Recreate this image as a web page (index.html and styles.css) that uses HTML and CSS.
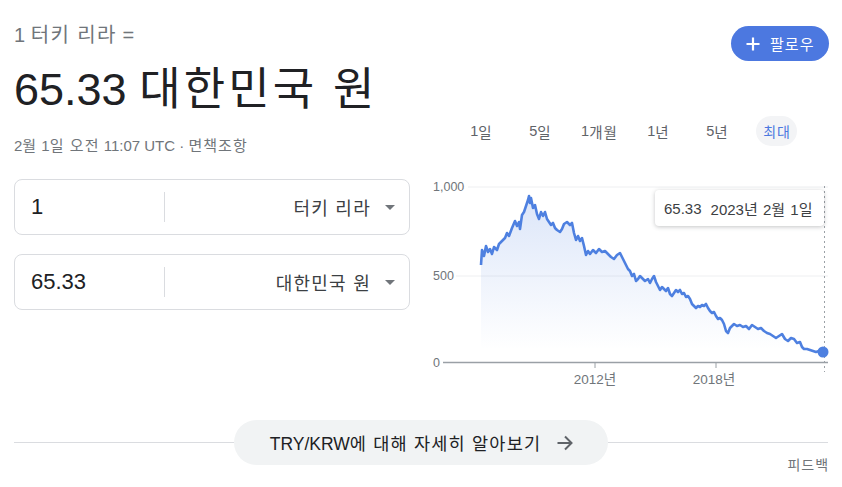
FILE: index.html
```html
<!DOCTYPE html>
<html lang="ko">
<head>
<meta charset="utf-8">
<title>TRY to KRW</title>
<link rel="stylesheet" href="styles.css">
</head>
<body>
<div class="page">
  <div class="main">
    <div class="left">
      <div class="label">1 <span class="ko">터키 리라</span> =</div>
      <div class="value">65.33 <span class="ko">대한민국 원</span></div>
      <div class="date">2<span class="ko">월</span> 1<span class="ko">일 오전</span> 11:07 UTC · <span class="ko">면책조항</span></div>
      <div class="field">
        <div class="amount">1</div>
        <div class="divider"></div>
        <div class="currency"><span class="ko">터키 리라</span><span class="caret"></span></div>
      </div>
      <div class="field">
        <div class="amount">65.33</div>
        <div class="divider"></div>
        <div class="currency"><span class="ko">대한민국 원</span><span class="caret"></span></div>
      </div>
    </div>
    <div class="right">
      <div class="follow-row">
        <button class="follow">
          <svg class="plus" width="14" height="14" viewBox="0 0 14 14"><path d="M7 0.5v13M0.5 7h13" stroke="#fff" stroke-width="2.2" fill="none"/></svg>
          <span class="ko">팔로우</span>
        </button>
      </div>
      <div class="tabs">
        <div class="tab">1<span class="ko">일</span></div>
        <div class="tab">5<span class="ko">일</span></div>
        <div class="tab">1<span class="ko">개월</span></div>
        <div class="tab">1<span class="ko">년</span></div>
        <div class="tab">5<span class="ko">년</span></div>
        <div class="tab"><span class="active ko">최대</span></div>
      </div>
      <div class="chart">
        <svg width="422" height="215" viewBox="420 175 422 215">
          <defs>
            <linearGradient id="fade" x1="0" y1="195" x2="0" y2="350" gradientUnits="userSpaceOnUse">
              <stop offset="0" stop-color="#4e80e0" stop-opacity="0.2"/>
              <stop offset="1" stop-color="#4e80e0" stop-opacity="0"/>
            </linearGradient>
          </defs>
          <line x1="468" y1="187" x2="828" y2="187" stroke="#eeeff1" stroke-width="1"/>
          <line x1="456" y1="276" x2="828" y2="276" stroke="#eeeff1" stroke-width="1"/>
          <text class="ylab" x="433" y="191">1,000</text>
          <text class="ylab" x="433" y="280">500</text>
          <text class="ylab" x="433" y="367">0</text>
          <path fill="url(#fade)" d="M481,265 L482,250 L484,256 L486,246 L488,252 L490,249 L492,254 L494,247 L497,250 L499,244 L502,241 L505,238 L507,233 L509,236 L512,228 L515,221 L517,226 L519,222 L520,229 L522,215 L524,212 L526,206 L528,200 L529,196 L530,203 L531,198 L533,208 L535,205 L537,214 L539,219 L541,212 L543,216 L545,212 L547,219 L549,222 L551,225 L553,223 L555,228 L557,230 L560,232 L562,229 L564,224 L567,222 L570,225 L572,223 L574,233 L576,240 L578,236 L580,241 L582,238 L584,246 L586,255 L588,251 L590,254 L593,250 L596,253 L599,249 L602,252 L605,251 L608,254 L611,257 L614,259 L617,255 L620,253 L622,257 L624,261 L626,265 L628,269 L630,271 L632,276 L634,274 L636,281 L638,279 L640,276 L642,278 L645,281 L648,279 L650,283 L652,279 L654,276 L656,282 L658,286 L660,290 L662,287 L664,289 L666,291 L668,288 L670,294 L672,296 L674,293 L676,290 L678,292 L680,290 L682,294 L684,293 L686,297 L688,296 L690,299 L692,304 L694,306 L696,308 L698,306 L700,307 L702,305 L704,306 L706,304 L708,308 L710,311 L712,313 L714,312 L716,316 L718,319 L720,318 L722,320 L724,324 L726,331 L728,333 L730,328 L732,326 L734,324 L737,326 L740,325 L743,327 L746,326 L749,329 L752,325 L755,327 L758,329 L761,328 L764,331 L767,333 L770,334 L773,336 L776,338 L779,336 L782,334 L785,339 L788,341 L791,338 L794,339 L797,343 L800,342 L802,347 L804,349 L807,349 L810,350 L813,351 L816,352 L819,351 L821,350 L823,352 L823,362 L481,362 Z"/>
          <path fill="none" stroke="#4e80e0" stroke-width="2.6" stroke-linejoin="round" d="M481,265 L482,250 L484,256 L486,246 L488,252 L490,249 L492,254 L494,247 L497,250 L499,244 L502,241 L505,238 L507,233 L509,236 L512,228 L515,221 L517,226 L519,222 L520,229 L522,215 L524,212 L526,206 L528,200 L529,196 L530,203 L531,198 L533,208 L535,205 L537,214 L539,219 L541,212 L543,216 L545,212 L547,219 L549,222 L551,225 L553,223 L555,228 L557,230 L560,232 L562,229 L564,224 L567,222 L570,225 L572,223 L574,233 L576,240 L578,236 L580,241 L582,238 L584,246 L586,255 L588,251 L590,254 L593,250 L596,253 L599,249 L602,252 L605,251 L608,254 L611,257 L614,259 L617,255 L620,253 L622,257 L624,261 L626,265 L628,269 L630,271 L632,276 L634,274 L636,281 L638,279 L640,276 L642,278 L645,281 L648,279 L650,283 L652,279 L654,276 L656,282 L658,286 L660,290 L662,287 L664,289 L666,291 L668,288 L670,294 L672,296 L674,293 L676,290 L678,292 L680,290 L682,294 L684,293 L686,297 L688,296 L690,299 L692,304 L694,306 L696,308 L698,306 L700,307 L702,305 L704,306 L706,304 L708,308 L710,311 L712,313 L714,312 L716,316 L718,319 L720,318 L722,320 L724,324 L726,331 L728,333 L730,328 L732,326 L734,324 L737,326 L740,325 L743,327 L746,326 L749,329 L752,325 L755,327 L758,329 L761,328 L764,331 L767,333 L770,334 L773,336 L776,338 L779,336 L782,334 L785,339 L788,341 L791,338 L794,339 L797,343 L800,342 L802,347 L804,349 L807,349 L810,350 L813,351 L816,352 L819,351 L821,350 L823,352"/>
          <line x1="443" y1="362.5" x2="828" y2="362.5" stroke="#9aa0a6" stroke-width="1.5"/>
          <line x1="595" y1="362" x2="595" y2="368" stroke="#9aa0a6" stroke-width="1"/>
          <line x1="716" y1="362" x2="716" y2="368" stroke="#9aa0a6" stroke-width="1"/>
          <text class="xlab" x="595" y="384">2012년</text>
          <text class="xlab" x="714" y="384">2018년</text>
          <line x1="824.5" y1="186" x2="824.5" y2="372" stroke="#9aa0a6" stroke-width="1" stroke-dasharray="2 3"/>
          <circle cx="823" cy="352" r="5.5" fill="#4e80e0"/>
        </svg>
        <div class="tooltip"><span>65.33</span><span>2023<span class="ko">년</span> 2<span class="ko">월</span> 1<span class="ko">일</span></span></div>
      </div>
    </div>
  </div>
  <div class="more-row">
    <div class="rule"></div>
    <div class="more">
      <span>TRY/KRW<span class="ko">에 대해 자세히 알아보기</span></span>
      <svg width="18" height="18" viewBox="0 0 18 18"><path d="M1.5 9h14M9 2.5l6.5 6.5-6.5 6.5" stroke="#5f6368" stroke-width="2" fill="none"/></svg>
    </div>
    <div class="rule"></div>
  </div>
  <div class="feedback"><span class="ko">피드백</span></div>
</div>
</body>
</html>
```

FILE: styles.css
```css
* { box-sizing: border-box; }
html, body { margin: 0; padding: 0; background: #fff; }
body {
  font-family: "Liberation Sans", "Noto Sans CJK KR", Arial, sans-serif;
  color: #202124;
  width: 842px;
  height: 487px;
  overflow: hidden;
}
.ko { letter-spacing: 0.07em; }
.page { width: 842px; }
.main { display: flex; }
.left {
  width: 410px;
  padding-left: 14px;
  padding-top: 23px;
}
.label {
  font-size: 20px;
  line-height: 24px;
  color: #70757a;
}
.value {
  margin-top: 15px;
  font-size: 45px;
  line-height: 56px;
  color: #202124;
}
.date {
  margin-top: 18px;
  font-size: 15px;
  line-height: 20px;
  color: #70757a;
}
.field {
  display: flex;
  align-items: center;
  height: 56px;
  border: 1px solid #dadce0;
  border-radius: 8px;
  margin-top: 23px;
}
.field + .field { margin-top: 19px; }
.amount {
  width: 149px;
  padding-left: 16px;
  font-size: 22px;
  color: #202124;
}
.divider {
  width: 1px;
  height: 30px;
  background: #dadce0;
}
.currency {
  flex: 1;
  display: flex;
  align-items: center;
  justify-content: flex-end;
  padding-right: 14px;
  font-size: 18px;
  color: #3c4043;
}
.caret {
  width: 0;
  height: 0;
  margin-left: 14px;
  border-left: 5px solid transparent;
  border-right: 5px solid transparent;
  border-top: 5px solid #70757a;
}
.right {
  width: 422px;
  margin-left: 10px;
}
.follow-row {
  display: flex;
  justify-content: flex-end;
  padding-top: 26px;
  padding-right: 13px;
}
.follow {
  display: flex;
  align-items: center;
  gap: 10px;
  height: 35px;
  width: 98px;
  padding: 0 0 0 15px;
  border: none;
  border-radius: 18px;
  background: #4c78e0;
  color: #fff;
  font-family: "Liberation Sans", "Noto Sans CJK KR", sans-serif;
  font-size: 15px;
}
.tabs {
  display: flex;
  margin-top: 55px;
  padding-left: 32px;
  height: 30px;
}
.tab {
  width: 59px;
  display: flex;
  align-items: center;
  justify-content: center;
  font-size: 14.5px;
  color: #5f6368;
}
.tab .active {
  display: flex;
  align-items: center;
  height: 30px;
  padding: 0 6px 0 7px;
  border-radius: 15px;
  background: #f3f4f6;
  color: #4c78e0;
  font-size: 14px;
}
.chart {
  position: relative;
  margin-top: 29px;
  height: 215px;
}
.chart svg { display: block; }
.ylab {
  font-family: "Liberation Sans", sans-serif;
  font-size: 12.5px;
  fill: #70757a;
}
.xlab {
  font-family: "Liberation Sans", "Noto Sans CJK KR", sans-serif;
  font-size: 13.5px;
  fill: #70757a;
  text-anchor: middle;
}
.tooltip {
  position: absolute;
  left: 235px;
  top: 15px;
  width: 169px;
  height: 36px;
  display: flex;
  align-items: center;
  gap: 9px;
  padding-left: 9px;
  background: #fff;
  border-radius: 4px;
  box-shadow: 0 1px 4px rgba(60, 64, 67, 0.3);
  font-size: 15px;
  color: #3c4043;
}
.more-row {
  display: flex;
  align-items: center;
  margin-top: 30px;
  padding: 0 14px;
}
.rule {
  flex: 1;
  height: 1px;
  background: #dadce0;
}
.more {
  display: flex;
  align-items: center;
  justify-content: center;
  gap: 15px;
  width: 374px;
  height: 45px;
  padding-left: 2px;
  border-radius: 23px;
  background: #f1f3f4;
  font-size: 17.5px;
  color: #202124;
}
.more svg { display: block; }
.feedback {
  margin-top: -8px;
  padding-right: 13px;
  text-align: right;
  font-size: 14px;
  line-height: 16px;
  color: #70757a;
}
```
